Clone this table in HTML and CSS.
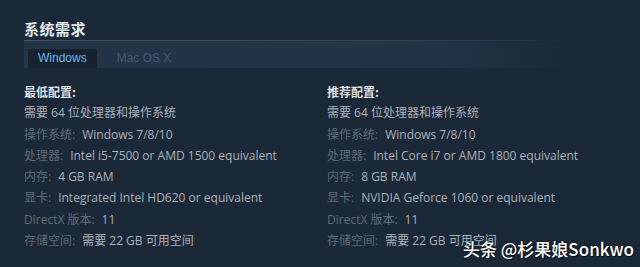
FILE: index.html
```html
<!DOCTYPE html>
<html lang="zh-CN">
<head>
<meta charset="utf-8">
<title>系统需求</title>
<link rel="stylesheet" href="styles.css">
</head>
<body>
<div class="page">
  <h2 class="title">系统需求</h2>
  <div class="tabs">
    <div class="tab active">Windows</div>
    <div class="tab">Mac OS X</div>
  </div>
  <div class="cols">
    <ul class="req">
      <li class="head">最低配置:</li>
      <li class="val">需要 64 位处理器和操作系统</li>
      <li><span class="lbl">操作系统:</span><span class="val">Windows 7/8/10</span></li>
      <li><span class="lbl">处理器:</span><span class="val">Intel i5-7500 or AMD 1500 equivalent</span></li>
      <li><span class="lbl">内存:</span><span class="val">4 GB RAM</span></li>
      <li><span class="lbl">显卡:</span><span class="val">Integrated Intel HD620 or equivalent</span></li>
      <li><span class="lbl">DirectX 版本:</span><span class="val">11</span></li>
      <li><span class="lbl">存储空间:</span><span class="val">需要 22 GB 可用空间</span></li>
    </ul>
    <ul class="req">
      <li class="head">推荐配置:</li>
      <li class="val">需要 64 位处理器和操作系统</li>
      <li><span class="lbl">操作系统:</span><span class="val">Windows 7/8/10</span></li>
      <li><span class="lbl">处理器:</span><span class="val">Intel Core i7 or AMD 1800 equivalent</span></li>
      <li><span class="lbl">内存:</span><span class="val">8 GB RAM</span></li>
      <li><span class="lbl">显卡:</span><span class="val">NVIDIA Geforce 1060 or equivalent</span></li>
      <li><span class="lbl">DirectX 版本:</span><span class="val">11</span></li>
      <li><span class="lbl">存储空间:</span><span class="val">需要 22 GB 可用空间</span></li>
    </ul>
  </div>
  <div class="watermark">头条 @杉果娘Sonkwo</div>
</div>
</body>
</html>
```
FILE: styles.css
```css
html, body {
  margin: 0;
  padding: 0;
  background: #1b2838;
}
body {
  width: 640px;
  height: 267px;
  overflow: hidden;
  font-family: "Open Sans", "Noto Sans CJK SC", sans-serif;
  font-size: 12px;
}
.page {
  position: relative;
  height: 267px;
  padding: 21px 0 0 24px;
  box-sizing: border-box;
}
.title {
  margin: 0;
  font-family: "Noto Sans CJK SC", sans-serif;
  font-size: 15px;
  line-height: 16px;
  font-weight: 700;
  color: #e6ebee;
  letter-spacing: 0.5px;
}
.tabs {
  margin-top: 3px;
  width: 545px;
  height: 28px;
  box-sizing: border-box;
  padding: 8px 0 0 4px;
  display: flex;
  align-items: flex-start;
  gap: 10px;
  border-top: 1px solid transparent;
  border-image: linear-gradient(to right, #3b5670, #2f465c 70%, rgba(27,40,56,0)) 1;
  background: linear-gradient(to right, #243547, #223346 75%, rgba(27,40,56,0));
  font-family: "Liberation Sans", sans-serif;
}
.tab {
  height: 19px;
  line-height: 19px;
  padding: 0 10px;
  color: #3f5b76;
}
.tab.active {
  background: #18222f;
  color: #67b6ea;
}
.cols {
  margin-top: 13px;
  display: grid;
  grid-template-columns: 303px 1fr;
}
.req {
  list-style: none;
  margin: 0;
  padding: 0;
}
.req li {
  line-height: 21.3px;
  white-space: nowrap;
  color: #acb2b8;
}
.req li.head {
  font-family: "Noto Sans CJK SC", sans-serif;
  font-weight: 700;
  color: #dfe3e6;
}
.lbl {
  color: #5f6c79;
  margin-right: 7px;
}
.val {
  color: #acb2b8;
}
.watermark {
  position: absolute;
  left: 463px;
  top: 237px;
  font-family: "Noto Sans CJK SC", sans-serif;
  font-size: 17px;
  line-height: 24px;
  font-weight: 500;
  color: #ffffff;
  text-shadow: 0 0 2px rgba(0,0,0,0.6), 1px 1px 1px rgba(0,0,0,0.5);
  white-space: nowrap;
}
```
